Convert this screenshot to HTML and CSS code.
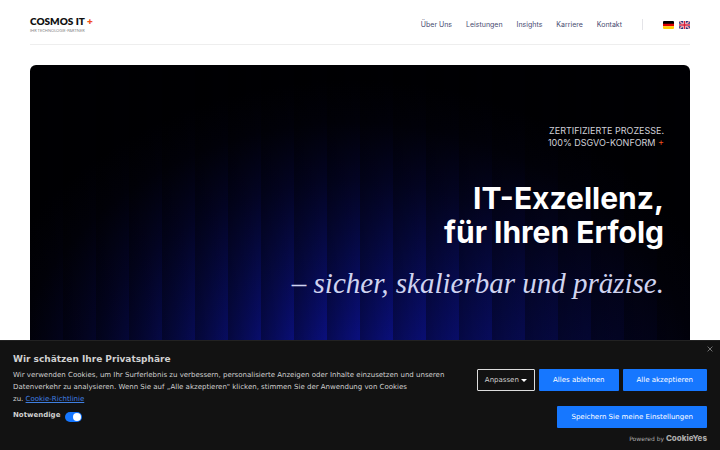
FILE: index.html
```
<!DOCTYPE html>
<html lang="de">
<head>
  <meta charset="UTF-8">
  <meta name="viewport" content="width=device-width, initial-scale=1.0">
  <title>COSMOS IT+</title>
  <link rel="stylesheet" href="styles.css">
</head>
<body>
  <header class="header">
    <a href="#" class="logo">
      <span class="logo-name">COSMOS IT <span class="plus">+</span></span>
      <span class="logo-claim">IHR TECHNOLOGIE-PARTNER</span>
    </a>
    <nav class="nav">
      <a href="#">Über Uns</a>
      <a href="#">Leistungen</a>
      <a href="#">Insights</a>
      <a href="#">Karriere</a>
      <a href="#">Kontakt</a>
    </nav>
    <div class="languages">
      <a href="#" aria-label="Deutsch">
        <svg class="flag" viewBox="0 0 22 16">
          <path fill="#000" d="M0 0h22v6H0z"/>
          <path fill="#e00000" d="M0 5.3h22v5.4H0z"/>
          <path fill="#ffce00" d="M0 10.7h22V16H0z"/>
        </svg>
      </a>
      <a href="#" aria-label="English">
        <svg class="flag" viewBox="0 0 22 16">
          <path fill="#26317a" d="M0 0h22v16H0z"/>
          <path stroke="#fff" stroke-width="2.6" d="M0 0l22 16M22 0L0 16"/>
          <path stroke="#d8203c" stroke-width="1.2" d="M0 0l22 16M22 0L0 16"/>
          <path stroke="#fff" stroke-width="5.4" d="M11 0v16M0 8h22"/>
          <path stroke="#d8203c" stroke-width="3.2" d="M11 0v16M0 8h22"/>
        </svg>
      </a>
    </div>
  </header>

  <main class="hero">
    <p class="hero-label">ZERTIFIZIERTE PROZESSE.<br>100% DSGVO-KONFORM <span class="plus">+</span></p>
    <h1 class="hero-title">IT-Exzellenz,<br>für Ihren Erfolg</h1>
    <p class="hero-subtitle">– sicher, skalierbar und präzise.</p>
  </main>

  <!-- Cookie banner -->
  <section class="cookie" aria-label="Wir schätzen Ihre Privatsphäre">
    <button class="cookie-close" aria-label="Schließen">
      <svg viewBox="0 0 10 10"><path d="M1 1l8 8M9 1L1 9"/></svg>
    </button>
    <h2 class="cookie-title">Wir schätzen Ihre Privatsphäre</h2>
    <div class="cookie-body">
      <div class="cookie-info">
        <p class="cookie-text">Wir verwenden Cookies, um Ihr Surferlebnis zu verbessern, personalisierte Anzeigen oder Inhalte einzusetzen und unseren Datenverkehr zu analysieren. Wenn Sie auf „Alle akzeptieren" klicken, stimmen Sie der Anwendung von Cookies <span class="nowrap">zu. <a href="#">Cookie-Richtlinie</a></span></p>
        <div class="cookie-option">
          <label for="necessary">Notwendige</label>
          <input type="checkbox" id="necessary" class="switch" checked>
        </div>
      </div>
      <div class="cookie-actions">
        <div class="cookie-row">
          <button class="btn btn-outline">Anpassen <span class="caret"></span></button>
          <button class="btn">Alles ablehnen</button>
          <button class="btn">Alle akzeptieren</button>
        </div>
        <button class="btn">Speichern Sie meine Einstellungen</button>
      </div>
    </div>
    <div class="cookie-powered">Powered by <a href="#">CookieYes</a></div>
  </section>
</body>
</html>
```
FILE: styles.css
```
* {
  box-sizing: border-box;
}

body {
  margin: 0;
  padding: 0 30px;
  height: 100vh;
  overflow: hidden;
  display: flex;
  flex-direction: column;
  font-family: Inter, sans-serif;
  background-color: #fff;
}

a {
  color: inherit;
  text-decoration: none;
}

.plus {
  color: #f0501e;
}

/* Header */
.header {
  display: flex;
  align-items: center;
  padding: 15px 0 10px;
  border-bottom: 1px solid #eee;
}

.logo {
  display: flex;
  flex-direction: column;
  color: #111;
}

.logo-name {
  font-family: Lato, sans-serif;
  font-size: 10px;
  font-weight: 800;
  line-height: 13px;
}

.logo-claim {
  font-family: Lato, sans-serif;
  font-size: 4px;
  line-height: 6px;
  color: #888;
}

.nav {
  display: flex;
  gap: 14px;
  margin-left: auto;
  padding-right: 20px;
  border-right: 1px solid #e4e4e8;
  font-size: 7px;
  line-height: 11px;
  color: #474a70;
}

.languages {
  display: flex;
  gap: 5px;
  margin-left: 20px;
}

.flag {
  display: block;
  width: 11px;
  height: 8px;
  border-radius: 1px;
}

/* Hero with vertical glass stripes */
.hero {
  flex: 1;
  margin-top: 20px;
  padding: 60px 26px 0;
  border-radius: 6px 6px 0 0;
  text-align: right;
  color: #fff;
  background:
    repeating-linear-gradient(90deg, rgba(0, 0, 0, 0.36) 0, rgba(0, 0, 0, 0) 5%),
    radial-gradient(ellipse 58% 84% at 49% 92%, #0c1290 0%, #0a0f7c 26%, #060a4c 52%, #030424 74%, #01010a 92%, #000003 105%);
}

.hero-label {
  margin: 0;
  font-size: 9px;
  line-height: 12px;
  color: #d0d0d8;
}

.hero-title {
  margin: 32px 0 0;
  font-size: 30px;
  line-height: 34px;
  font-weight: 700;
}

.hero-subtitle {
  margin: 14px 0 0;
  font-family: "Liberation Serif", serif;
  font-size: 29px;
  line-height: 40px;
  font-style: italic;
  color: #d0d4f0;
}

/* Cookie banner */
.cookie {
  position: fixed;
  left: 0;
  right: 0;
  bottom: 0;
  padding: 12px 13px 5px;
  border-top: 1px solid #222;
  font-family: "DejaVu Sans", sans-serif;
  font-size: 7px;
  line-height: 12px;
  color: #d0d0d0;
  background-color: #121212;
}

.cookie-close {
  position: absolute;
  top: 5px;
  right: 7px;
  width: 6px;
  height: 6px;
  padding: 0;
  border: none;
  background: none;
}

.cookie-close svg {
  display: block;
  stroke: #999;
  stroke-width: 1.2;
}

.cookie-title {
  margin: 0;
  font-size: 9px;
  line-height: 12px;
}

.cookie-body {
  display: flex;
  justify-content: space-between;
  gap: 30px;
  margin-top: 4px;
}

.cookie-info {
  flex: 1;
}

.cookie-text {
  margin: 0;
}

.cookie-text a {
  color: #3f7fe0;
  text-decoration: underline;
}

.nowrap {
  white-space: nowrap;
}

.cookie-option {
  display: flex;
  align-items: center;
  gap: 5px;
  margin-top: 3px;
  font-weight: bold;
}

.switch {
  appearance: none;
  display: flex;
  align-items: center;
  justify-content: flex-end;
  width: 17px;
  height: 10px;
  margin: 4px 0 0;
  padding: 1px;
  border-radius: 5px;
  background-color: #1677ff;
}

.switch::before {
  content: "";
  width: 8px;
  height: 8px;
  border-radius: 50%;
  background-color: #fff;
}

.cookie-actions {
  display: flex;
  flex-direction: column;
  align-items: flex-end;
  gap: 15px;
}

.cookie-row {
  display: flex;
  gap: 4px;
}

.btn {
  height: 22px;
  padding: 0 14px;
  border: none;
  border-radius: 1px;
  font-family: inherit;
  font-size: 7px;
  color: #fff;
  background-color: #1677ff;
}

.btn-outline {
  padding: 0 7px;
  border: 1px solid #ddd;
  color: #d0d0d0;
  background: none;
}

.caret {
  display: inline-block;
  border: 3px solid transparent;
  border-top-color: #fff;
  border-bottom: none;
  vertical-align: middle;
}

.cookie-powered {
  margin-top: 4px;
  text-align: right;
  font-size: 6px;
  color: #aaa;
}

.cookie-powered a {
  font-family: Inter, sans-serif;
  font-size: 8px;
  font-weight: 800;
}
```
